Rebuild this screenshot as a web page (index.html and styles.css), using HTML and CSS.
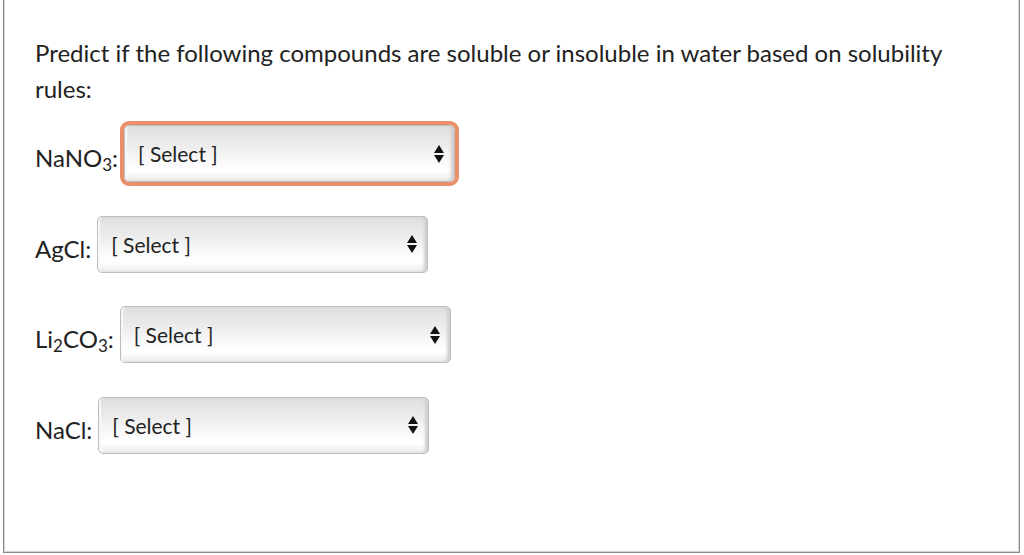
FILE: index.html
```html
<!DOCTYPE html>
<html lang="en">

<head>
    <meta charset="UTF-8">
    <meta name="viewport" content="width=device-width, initial-scale=1.0">
    <title>Solubility Rules</title>
    <link rel="stylesheet" href="styles.css">
</head>

<body>
    <div class="question">
        <p class="prompt">Predict if the following compounds are soluble or insoluble in water based on solubility rules:</p>

        <div class="row">
            <span class="label">NaNO<sub>3</sub>:</span>
            <div class="select focused">
                <span>[ Select ]</span>
                <svg class="arrows" width="10" height="18" viewBox="0 0 10 18"><path d="M5 0 L10 8 L0 8 Z M0 10 L10 10 L5 18 Z" fill="#111"/></svg>
            </div>
        </div>

        <div class="row">
            <span class="label">AgCl:</span>
            <div class="select">
                <span>[ Select ]</span>
                <svg class="arrows" width="10" height="18" viewBox="0 0 10 18"><path d="M5 0 L10 8 L0 8 Z M0 10 L10 10 L5 18 Z" fill="#111"/></svg>
            </div>
        </div>

        <div class="row">
            <span class="label">Li<sub>2</sub>CO<sub>3</sub>:</span>
            <div class="select">
                <span>[ Select ]</span>
                <svg class="arrows" width="10" height="18" viewBox="0 0 10 18"><path d="M5 0 L10 8 L0 8 Z M0 10 L10 10 L5 18 Z" fill="#111"/></svg>
            </div>
        </div>

        <div class="row">
            <span class="label">NaCl:</span>
            <div class="select">
                <span>[ Select ]</span>
                <svg class="arrows" width="10" height="18" viewBox="0 0 10 18"><path d="M5 0 L10 8 L0 8 Z M0 10 L10 10 L5 18 Z" fill="#111"/></svg>
            </div>
        </div>
    </div>
</body>

</html>
```

FILE: styles.css
```css
body {
    margin: 0;
    font-family: Lato, "Noto Sans", sans-serif;
    color: #222;
    background-color: #fff;
}

/* Question frame, its top edge is cut off */
.question {
    box-sizing: border-box;
    width: 1017px;
    height: 553px;
    margin-left: 3px;
    padding: 35px 31px 0 31px;
    border: 1px solid #8a8a8a;
    border-top: none;
    box-shadow: inset 1px 0 0 #d4d4d4, inset -1px 0 0 #d4d4d4, inset 0 -1px 0 #d4d4d4;
}

.prompt {
    margin: 0 0 18px 0;
    font-size: 24px;
    line-height: 36px;
}

.row {
    display: flex;
    align-items: center;
    gap: 6px;
    margin-bottom: 33.5px;
}

.label {
    font-size: 24px;
    padding-top: 8px;
}

.label sub {
    font-size: 17px;
    vertical-align: -4px;
    line-height: 0;
}

.select {
    box-sizing: border-box;
    width: 331px;
    height: 57px;
    display: flex;
    align-items: center;
    justify-content: space-between;
    padding: 0 10px 0 13px;
    font-size: 21px;
    border: 1px solid #bdbdbd;
    border-radius: 5px;
    background: linear-gradient(#dfdfdf 0%, #ececec 35%, #fafafa 65%, #ffffff 82%, #ececec 100%);
    box-shadow: inset 2px 0 1px #f8f8f8, inset -3px 0 3px #cfcfcf;
}

.select.focused {
    outline: 4px solid #e9906a;
    outline-offset: 0;
    border-radius: 5px;
}

.arrows {
    display: block;
}
```
